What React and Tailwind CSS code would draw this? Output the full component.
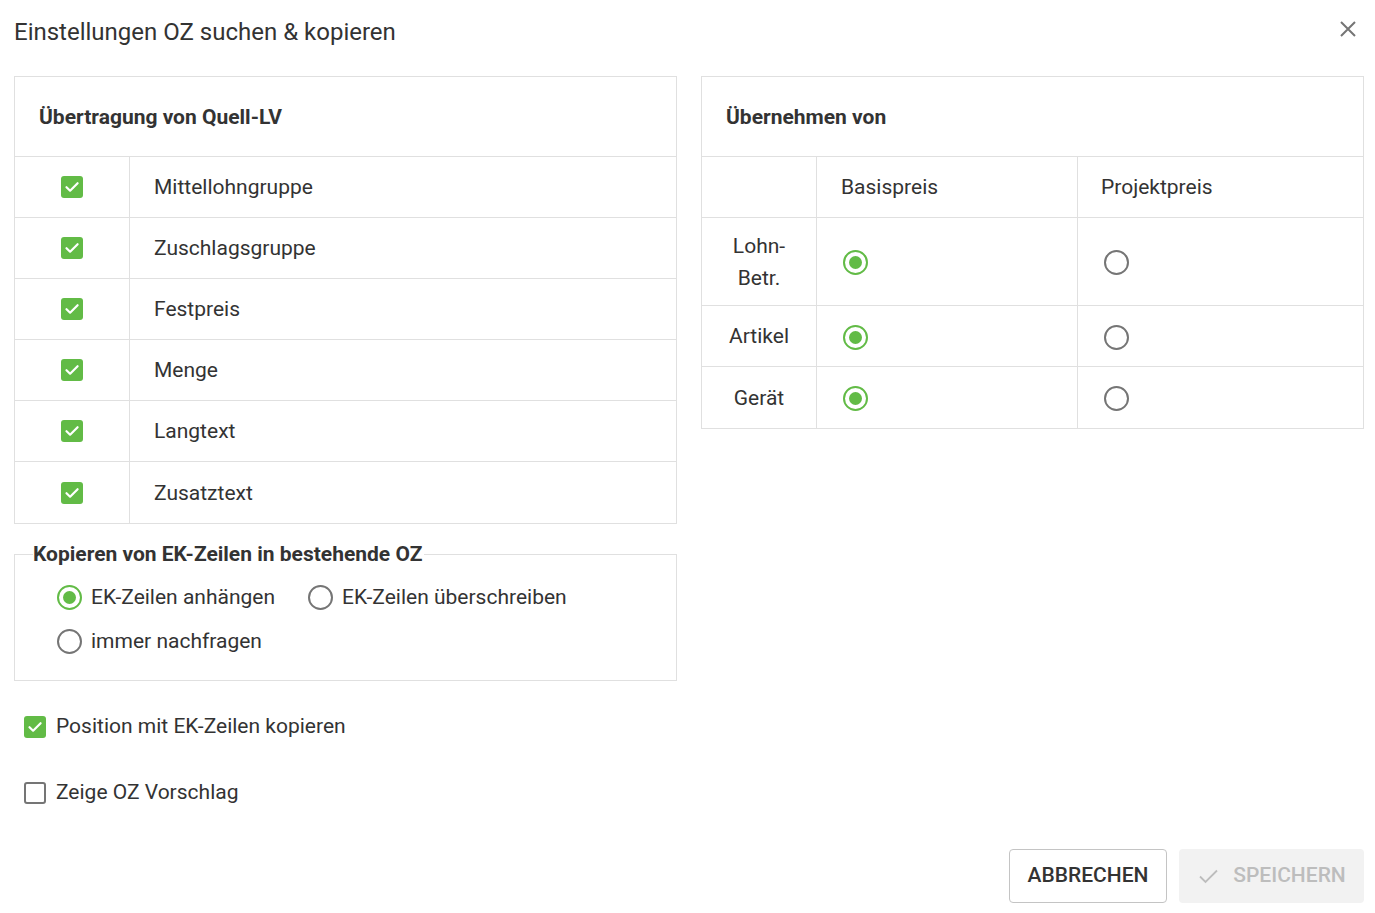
import React, { useState } from 'react';

const font = { fontFamily: 'Roboto, "Liberation Sans", sans-serif' };

const Check = ({ checked, onChange }) => (
  <button
    onClick={onChange}
    className={`w-[22px] h-[22px] rounded-[3px] flex items-center justify-center shrink-0 ${
      checked ? 'bg-[#62bb46]' : 'border-2 border-[#757575] bg-white'
    }`}
  >
    {checked && (
      <svg width="18" height="18" viewBox="0 0 18 18" fill="none">
        <path d="M3.5 9.2l3.6 3.5L14.6 5.2" stroke="white" strokeWidth="2.2" strokeLinecap="round" strokeLinejoin="round" />
      </svg>
    )}
  </button>
);

const Radio = ({ checked, onClick }) => (
  <button
    onClick={onClick}
    className={`w-[25px] h-[25px] rounded-full border-2 flex items-center justify-center shrink-0 bg-white ${
      checked ? 'border-[#62bb46]' : 'border-[#757575]'
    }`}
  >
    {checked && <span className="w-[13px] h-[13px] rounded-full bg-[#62bb46]" />}
  </button>
);

const fields = ['Mittellohngruppe', 'Zuschlagsgruppe', 'Festpreis', 'Menge', 'Langtext', 'Zusatztext'];
const prices = [
  { key: 'lohn', label: <>Lohn-<br />Betr.</>, tall: true },
  { key: 'artikel', label: 'Artikel' },
  { key: 'geraet', label: 'Gerät' },
];

export default function App() {
  const [checked, setChecked] = useState(fields.map(() => true));
  const [source, setSource] = useState({ lohn: 'basis', artikel: 'basis', geraet: 'basis' });
  const [mode, setMode] = useState('append');
  const [withRows, setWithRows] = useState(true);
  const [showOz, setShowOz] = useState(false);

  return (
    <div style={font} className="w-[1375px] h-[913px] bg-white text-[#333] relative">
      <div className="flex items-center justify-between pl-[14px] pr-[18px] h-[64px]">
        <h1 className="text-[24px] leading-none">Einstellungen OZ suchen &amp; kopieren</h1>
        <button className="text-[#757575] -mt-[6px]">
          <svg width="18" height="18" viewBox="0 0 18 18">
            <path d="M2 2l14 14M16 2L2 16" stroke="currentColor" strokeWidth="2" />
          </svg>
        </button>
      </div>

      <div className="flex gap-[24px] pl-[14px] pr-[11px] mt-[12px] items-start">
        {/* left column */}
        <div className="w-[663px] shrink-0">
          <div className="border border-[#e0e0e0]">
            <div className="h-[80px] flex items-center px-[24px] pt-[2px] font-bold text-[21px] border-b border-[#e0e0e0]">
              Übertragung von Quell-LV
            </div>
            {fields.map((f, i) => (
              <div key={f} className={`flex h-[61px] ${i < fields.length - 1 ? 'border-b border-[#e0e0e0]' : ''}`}>
                <div className="w-[115px] border-r border-[#e0e0e0] flex items-center justify-center">
                  <Check checked={checked[i]} onChange={() => setChecked(checked.map((c, j) => (j === i ? !c : c)))} />
                </div>
                <div className="flex items-center pl-[24px] pt-[2px] text-[21px]">{f}</div>
              </div>
            ))}
          </div>

          <fieldset className="border border-[#e0e0e0] mt-[18px] pl-[42px] pb-[23px] pt-[14px]">
            <legend className="font-bold text-[21px] -ml-[24px] pr-[2px] leading-[24px]">
              Kopieren von EK-Zeilen in bestehende OZ
            </legend>
            <div className="flex flex-wrap items-center gap-y-[12px] mt-[2px]">
              <label className="flex items-center gap-[9px] text-[21px] mr-[33px] cursor-pointer" onClick={() => setMode('append')}>
                <Radio checked={mode === 'append'} />
                EK-Zeilen anhängen
              </label>
              <label className="flex items-center gap-[9px] text-[21px] cursor-pointer" onClick={() => setMode('overwrite')}>
                <Radio checked={mode === 'overwrite'} />
                EK-Zeilen überschreiben
              </label>
              <label className="flex items-center gap-[9px] text-[21px] w-full cursor-pointer" onClick={() => setMode('ask')}>
                <Radio checked={mode === 'ask'} />
                immer nachfragen
              </label>
            </div>
          </fieldset>

          <div className="pl-[10px] mt-[35px] flex flex-col gap-[44px]">
            <label className="flex items-center gap-[10px] text-[21px] h-[22px]">
              <Check checked={withRows} onChange={() => setWithRows(!withRows)} />
              Position mit EK-Zeilen kopieren
            </label>
            <label className="flex items-center gap-[10px] text-[21px] h-[22px]">
              <Check checked={showOz} onChange={() => setShowOz(!showOz)} />
              Zeige OZ Vorschlag
            </label>
          </div>
        </div>

        {/* right column */}
        <div className="flex-1 border border-[#e0e0e0]">
          <div className="h-[80px] flex items-center px-[24px] pt-[2px] font-bold text-[21px] border-b border-[#e0e0e0]">
            Übernehmen von
          </div>
          <div className="grid grid-cols-[115px_261px_1fr] text-[21px]">
            <div className="h-[61px] border-r border-b border-[#e0e0e0]" />
            <div className="h-[61px] border-r border-b border-[#e0e0e0] flex items-center pl-[24px] pt-[2px]">Basispreis</div>
            <div className="h-[61px] border-b border-[#e0e0e0] flex items-center pl-[23px] pt-[2px]">Projektpreis</div>
            {prices.map((p, i) => {
              const last = i === prices.length - 1;
              const h = p.tall ? 'h-[88px]' : 'h-[61px]';
              const b = last ? '' : 'border-b';
              return (
                <React.Fragment key={p.key}>
                  <div className={`${h} ${b} border-r border-[#e0e0e0] flex items-center justify-center text-center leading-[32px]`}>
                    {p.label}
                  </div>
                  <div className={`${h} ${b} border-r border-[#e0e0e0] flex items-center pl-[26px] pt-[2px]`}>
                    <Radio checked={source[p.key] === 'basis'} onClick={() => setSource({ ...source, [p.key]: 'basis' })} />
                  </div>
                  <div className={`${h} ${b} border-[#e0e0e0] flex items-center pl-[26px] pt-[2px]`}>
                    <Radio checked={source[p.key] === 'projekt'} onClick={() => setSource({ ...source, [p.key]: 'projekt' })} />
                  </div>
                </React.Fragment>
              );
            })}
          </div>
        </div>
      </div>

      <div className="absolute right-[11px] bottom-[10px] flex gap-[12px]">
        <button className="w-[158px] h-[54px] border border-[#c4c4c4] rounded-[4px] text-[21px] font-medium text-[#333]">
          ABBRECHEN
        </button>
        <button disabled className="w-[185px] h-[54px] rounded-[4px] bg-[#f2f2f2] text-[21px] font-medium text-[#bdbdbd] flex items-center justify-center gap-[14px]">
          <svg width="22" height="22" viewBox="0 0 22 22" fill="none">
            <path d="M3 11.5l5.5 5.5L20 5.5" stroke="#bdbdbd" strokeWidth="1.8" />
          </svg>
          SPEICHERN
        </button>
      </div>
    </div>
  );
}
